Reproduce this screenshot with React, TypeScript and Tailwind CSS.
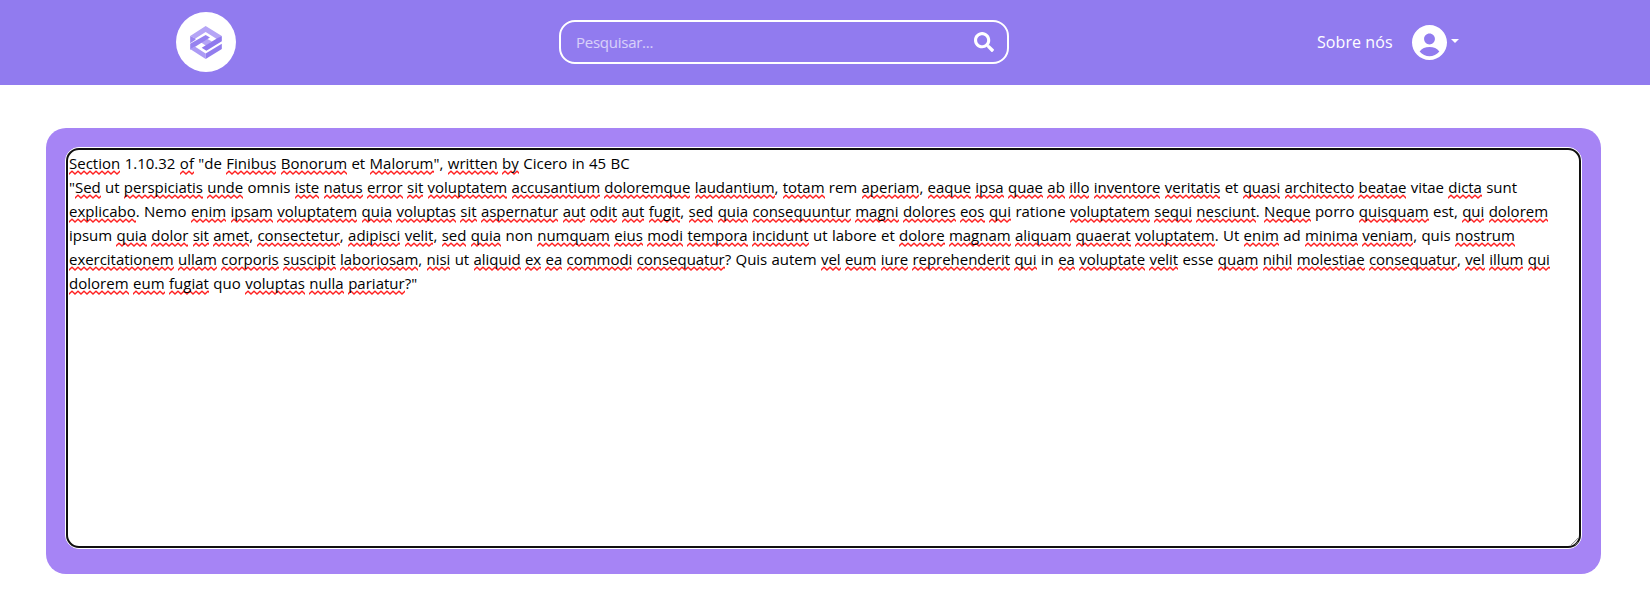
import React from "react";
import { FaSearch } from "react-icons/fa";

function Logo({ className }: { className: string }) {
  return (
    <svg viewBox="0 0 96 100" className={className}>
      <path d="M0 30 47 0 96 30 82 40 47 18 16 38Z" fill="#b5a5f6" />
      <path d="M0 30 16 38V42L0 52Z" fill="#9a86f0" />
      <path d="M30 48 47 36 66 47 48 60Z" fill="#b5a5f6" />
      <path d="M0 72V54L47 27 60 35 14 64Z" fill="#9682f0" />
      <path d="M96 30V46L49 75 35 66 82 37Z" fill="#8f79ee" />
      <path d="M0 70 14 62 47 83V100Z" fill="#ac9bf5" />
      <path d="M47 100V83L82 62 96 54V70Z" fill="#927dee" />
    </svg>
  );
}

function AccountIcon() {
  return (
    <svg viewBox="2 2 20 20" className="size-[35px]" fill="#fff">
      <path d="M12 2C6.48 2 2 6.48 2 12s4.48 10 10 10 10-4.48 10-10S17.52 2 12 2zm0 4.9c1.71 0 3.1 1.39 3.1 3.1S13.71 13.1 12 13.1 8.9 11.71 8.9 10 10.29 6.9 12 6.9zM12 19.8c-2.03 0-4.23-.8-5.64-2.68C7.55 15.4 9.68 14.6 12 14.6s4.45.8 5.64 2.52C16.23 19 14.03 19.8 12 19.8z" />
    </svg>
  );
}

const lines: { text: string; spacing: string }[] = [
  { text: '[Section] 1.10.32 [of] "de [Finibus] [Bonorum] et [Malorum]", [written] [by] Cicero in 45 BC', spacing: "tracking-[0.008px]" },
  { text: '"[Sed] ut [perspiciatis] [unde] omnis [iste] [natus] [error] [sit] [voluptatem] [accusantium] [doloremque] [laudantium], [totam] rem [aperiam], [eaque] [ipsa] [quae] [ab] [illo] [inventore] [veritatis] et [quasi] [architecto] [beatae] vitae [dicta] sunt', spacing: "tracking-[-0.034px]" },
  { text: "[explicabo]. Nemo [enim] [ipsam] [voluptatem] [quia] [voluptas] [sit] [aspernatur] [aut] [odit] [aut] [fugit], [sed] [quia] [consequuntur] [magni] [dolores] [eos] [qui] ratione [voluptatem] [sequi] [nesciunt]. [Neque] porro [quisquam] est, [qui] [dolorem]", spacing: "tracking-[-0.008px]" },
  { text: "ipsum [quia] [dolor] [sit] [amet], [consectetur], [adipisci] [velit], [sed] [quia] non [numquam] [eius] [modi] [tempora] [incidunt] ut labore et [dolore] [magnam] [aliquam] [quaerat] [voluptatem]. Ut [enim] ad [minima] [veniam], quis [nostrum]", spacing: "tracking-[-0.019px]" },
  { text: "[exercitationem] [ullam] [corporis] [suscipit] [laboriosam], [nisi] ut [aliquid] [ex] [ea] [commodi] [consequatur]? Quis autem [vel] [eum] [iure] [reprehenderit] [qui] in [ea] [voluptate] [velit] esse [quam] [nihil] [molestiae] [consequatur], [vel] [illum] [qui]", spacing: "tracking-[-0.03px]" },
  { text: '[dolorem] [eum] [fugiat] quo [voluptas] [nulla] [pariatur]?"', spacing: "tracking-[0.02px]" },
];

function Line({ text, spacing }: { text: string; spacing: string }) {
  return (
    <p className={`h-6 whitespace-nowrap ${spacing}`}>
      {text.split(/(\[[^\]]+\])/).map((part, i) =>
        part.startsWith("[") ? (
          <span
            key={i}
            className="bg-[url('data:image/svg+xml,%3Csvg%20xmlns=%22http://www.w3.org/2000/svg%22%20width=%226%22%20height=%225%22%3E%3Cpath%20d=%22M-1.5%202.5L0%204L3%201.2L6%204L7.5%202.5%22%20fill=%22none%22%20stroke=%22%23f22%22%20stroke-width=%221.3%22/%3E%3C/svg%3E')] bg-[length:6px_5px] bg-bottom-left bg-repeat-x pb-0.5"
          >
            {part.slice(1, -1)}
          </span>
        ) : (
          part
        ),
      )}
    </p>
  );
}

export default function App() {
  return (
    <div className="h-[598px] overflow-hidden bg-white font-['Open_Sans',sans-serif]">
      <header className="flex h-[85px] items-center bg-[#917bef] pl-44 text-white">
        <div className="mb-px flex size-[60px] items-center justify-center rounded-full bg-white">
          <Logo className="h-[33px] w-8" />
        </div>
        <div className="mb-px ml-[323px] flex h-11 w-[450px] items-center justify-between rounded-2xl border-2 border-white pr-[13px] pl-[15px]">
          <span className="text-[15px] leading-6 tracking-[-0.25px] text-white/65">Pesquisar...</span>
          <FaSearch className="size-5" />
        </div>
        <a className="mb-px ml-[308px] w-[75px] text-base leading-6 tracking-[0.08px] whitespace-nowrap">Sobre nós</a>
        <div className="ml-5 flex items-center">
          <AccountIcon />
          <svg viewBox="0 0 8 4" className="mb-1 ml-1 h-1 w-2" fill="#fff"><path d="M0 0H8L4 4Z" /></svg>
        </div>
      </header>
      <main className="mt-[43px] ml-[46px] h-[446px] w-[1555px] rounded-[20px] bg-[#a684f5] p-[19px]">
        <div className="h-[402px] w-[1517px] rounded-[14px] border border-white bg-white">
          <div className="relative h-full rounded-[13px] border-2 border-[#101010] pt-px pl-px text-[15px] leading-6 text-black [word-spacing:0.48px]">
            {lines.map((line) => (
              <Line key={line.text} {...line} />
            ))}
            <svg viewBox="0 0 10 10" className="absolute right-0 bottom-0 size-2" stroke="#777" strokeWidth="1.2">
              <path d="M0 9 9 0M5 9 9 5" />
            </svg>
          </div>
        </div>
      </main>
    </div>
  );
}
